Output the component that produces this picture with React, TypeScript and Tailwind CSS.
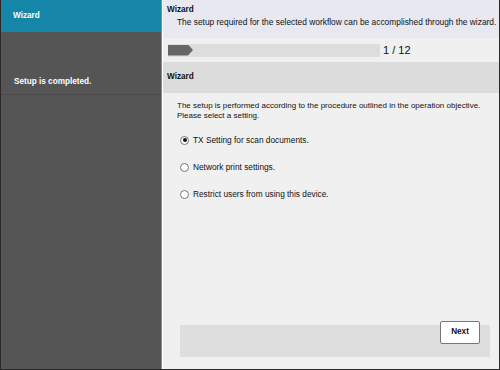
import React from "react";

const options = [
    "TX Setting for scan documents.",
    "Network print settings.",
    "Restrict users from using this device.",
];

function Radio({ checked }: { checked: boolean }) {
    return (
        <span className="w-[9px] h-[9px] rounded-full border border-[#777] bg-white flex items-center justify-center">
            {checked && <span className="w-[4px] h-[4px] rounded-full bg-[#111]" />}
        </span>
    );
}

export default function App() {
    return (
        <div
            className="w-[500px] h-[370px] flex border-x border-b border-[#2a2a2a] overflow-hidden"
            style={{ fontFamily: '"Liberation Sans", Arial, sans-serif' }}
        >
            {/* Sidebar */}
            <div className="w-[161px] flex flex-col bg-[#555555] border-r border-[#8a8a8a]">
                <div className="h-[32px] bg-[#1586a7] flex items-center pl-[12px] text-white font-bold text-[8.2px]">
                    Wizard
                </div>
                <div className="h-[63px] flex items-end pb-[6px] pl-[13px] text-white font-bold text-[8.2px] border-b border-[#4a4a4a]">
                    Setup is completed.
                </div>
            </div>

            {/* Main */}
            <div className="flex-1 flex flex-col bg-[#f0f0f0] border-l border-white text-[#111]">
                <div className="h-[38px] bg-[#e8e8f1] pl-[4px] pt-[4px]">
                    <div className="font-bold text-[8.2px] leading-[12px]">Wizard</div>
                    <div className="pl-[10px] text-[8.4px] leading-[12px] whitespace-nowrap">
                        The setup required for the selected workflow can be accomplished through the wizard.
                    </div>
                </div>

                <div className="h-[24px] flex items-center pl-[5px] gap-[3px]">
                    <div className="w-[212px] h-[13px] bg-[#dddddd] flex items-center">
                        <div
                            className="w-[25px] h-[11px] bg-[#666666]"
                            style={{ clipPath: "polygon(0 0, 80% 0, 100% 50%, 80% 100%, 0 100%)" }}
                        />
                    </div>
                    <span className="text-[11px]">1 / 12</span>
                </div>

                <div className="h-[31px] bg-[#dcdcdc] flex items-center pl-[4px] font-bold text-[8.2px]">
                    Wizard
                </div>

                <div className="flex-1 flex flex-col pl-[17px] pr-[9px] pt-[8px] pb-[12px]">
                    <div className="text-[8px] leading-[10px] -ml-[3px] whitespace-nowrap">
                        <div>The setup is performed according to the procedure outlined in the operation objective.</div>
                        <div>Please select a setting.</div>
                    </div>
                    <div className="flex flex-col gap-[17px] mt-[14px]">
                        {options.map((o, i) => (
                            <label key={o} className="flex items-center gap-[4px] text-[8.3px] leading-[10px]">
                                <Radio checked={i === 0} />
                                <span>{o}</span>
                            </label>
                        ))}
                    </div>
                    <div className="mt-auto h-[32px] bg-[#dedede] flex justify-end items-start pr-[10px]">
                        <button className="-mt-[4px] w-[40px] h-[23px] bg-white border border-[#777] rounded-[2px] text-[8.2px] font-bold">
                            Next
                        </button>
                    </div>
                </div>
            </div>
        </div>
    );
}
